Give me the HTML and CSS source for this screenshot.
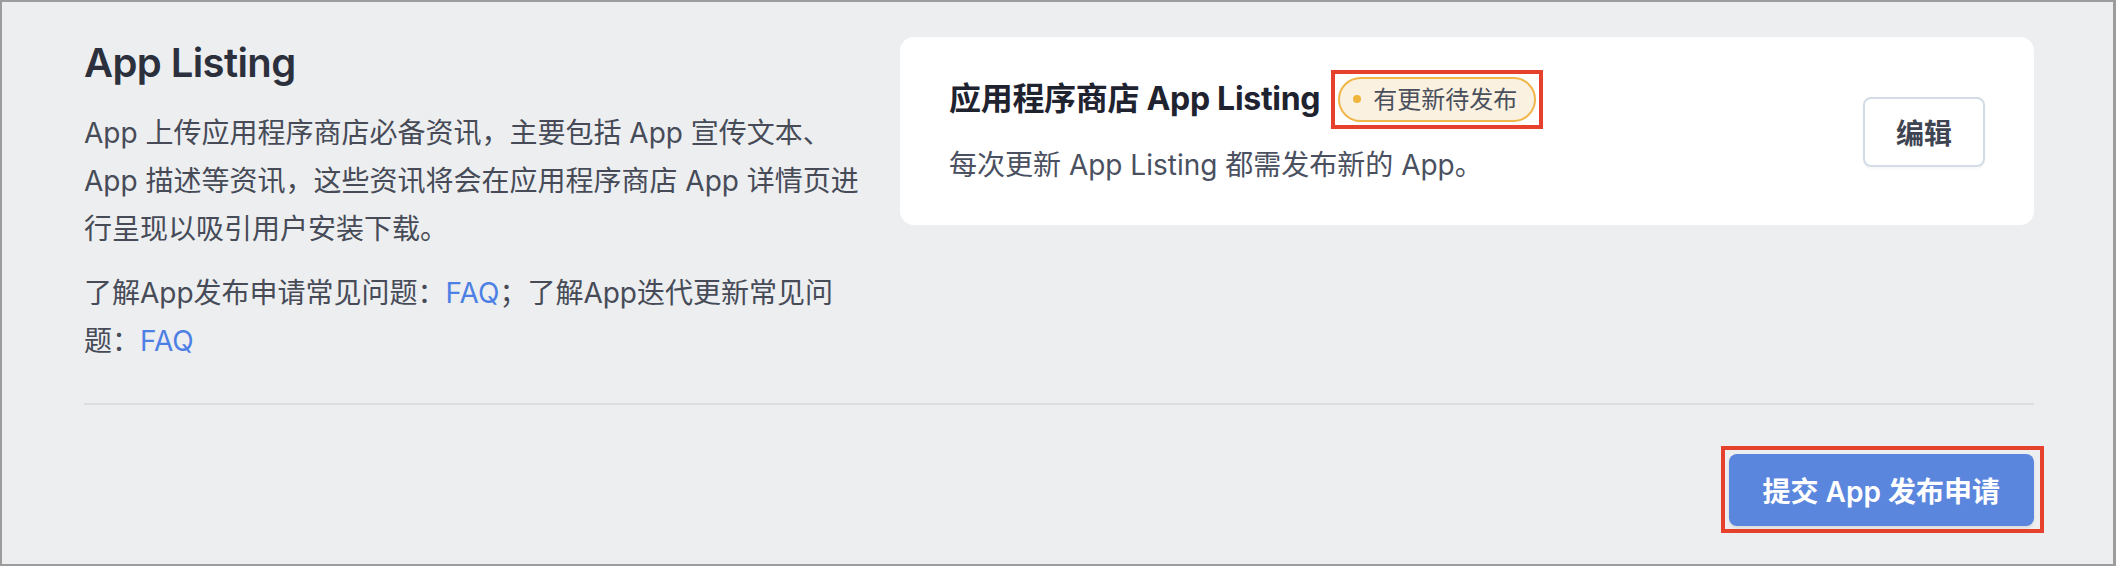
FILE: index.html
```html
<!DOCTYPE html>
<html>
<head>
  <title>App Listing</title>
  <link rel="stylesheet" href="styles.css">
</head>
<body>
  <div class="frame">
    <div class="listing">
      <div class="intro">
        <h2 class="intro-title">App Listing</h2>
        <p class="intro-text">App 上传应用程序商店必备资讯，主要包括 App 宣传文本、App 描述等资讯，这些资讯将会在应用程序商店 App 详情页进行呈现以吸引用户安装下载。</p>
        <p class="intro-text">了解App发布申请常见问题：<a class="link" href="#">FAQ</a>；了解App迭代更新常见问题：<a class="link" href="#">FAQ</a></p>
      </div>

      <div class="card">
        <div class="card-body">
          <div class="card-title">
            <span class="card-name">应用程序商店 App Listing</span>
            <span class="annotate badge-annotate">
              <span class="badge"><span class="badge-dot"></span>有更新待发布</span>
            </span>
          </div>
          <div class="card-desc">每次更新 App Listing 都需发布新的 App。</div>
        </div>
        <button class="edit-button">编辑</button>
      </div>
    </div>

    <hr class="divider">

    <div class="actions">
      <span class="annotate submit-annotate">
        <button class="submit-button">提交 App 发布申请</button>
      </span>
    </div>
  </div>
</body>
</html>
```

FILE: styles.css
```css
* {
  box-sizing: border-box;
}
body {
  margin: 0;
  font-family: Inter, "Noto Sans CJK SC", sans-serif;
  background-color: #edeef0;
}
.frame {
  width: 2116px;
  height: 566px;
  border: 2px solid #9c9c9c;
  border-right-width: 3px;
  padding: 35px 79px 0 82px;
  background-color: #edeef0;
  overflow: hidden;
}
.listing {
  display: grid;
  grid-template-columns: 778px 1fr;
  column-gap: 38px;
  align-items: start;
}
.intro-title {
  margin: 0 0 20px 0;
  font-size: 40px;
  line-height: 52px;
  font-weight: 600;
  letter-spacing: -0.6px;
  color: #2b303c;
}
.intro-text {
  margin: 0 0 16px 0;
  font-size: 28px;
  line-height: 48px;
  color: #464b57;
}
.intro-text:last-child {
  margin-bottom: 0;
}
.link {
  color: #4d80e4;
  text-decoration: none;
}
.card {
  display: flex;
  align-items: center;
  justify-content: space-between;
  background-color: #fff;
  border-radius: 14px;
  padding: 38px 49px 36px 49px;
}
.card-title {
  display: flex;
  align-items: center;
  font-size: 32px;
  line-height: 48px;
  font-weight: 700;
  color: #1f2330;
}
.card-name {
  letter-spacing: -0.3px;
}
.card-desc {
  margin-top: 18px;
  font-size: 28px;
  line-height: 48px;
  color: #4a5060;
}
.annotate {
  display: inline-block;
  border: 4px solid #e5412d;
}
.badge-annotate {
  padding: 3px;
  margin: -7px 0 -7px 11px;
}
.badge {
  display: flex;
  align-items: center;
  height: 45px;
  padding: 0 17px 0 13px;
  border: 2px solid #f0b64a;
  border-radius: 23px;
  background-color: #faf1e1;
  font-size: 24px;
  line-height: 41px;
  font-weight: 400;
  color: #4a4f5c;
}
.badge-dot {
  width: 8px;
  height: 8px;
  margin-right: 12px;
  border-radius: 50%;
  background-color: #f0b43c;
}
.edit-button {
  height: 70px;
  padding: 0 31px;
  border: 2px solid #d3dce6;
  border-radius: 8px;
  background-color: #fff;
  box-shadow: 0 2px 2px rgba(0, 0, 0, 0.03);
  font-family: inherit;
  font-size: 28px;
  font-weight: 700;
  color: #3f4452;
  cursor: pointer;
}
.divider {
  margin: 38px 0 0 0;
  height: 2px;
  border: none;
  background-color: #dcdde0;
}
.actions {
  display: flex;
  justify-content: flex-end;
  margin-top: 41px;
  margin-right: -10px;
}
.submit-annotate {
  padding: 4px 6px 3px 4px;
}
.submit-button {
  display: block;
  height: 72px;
  padding: 0 34px;
  border: none;
  border-radius: 8px;
  background-color: #5b86dd;
  box-shadow: 0 2px 3px rgba(0, 0, 0, 0.08);
  font-family: inherit;
  font-size: 28px;
  font-weight: 600;
  color: #fff;
  cursor: pointer;
}
```
